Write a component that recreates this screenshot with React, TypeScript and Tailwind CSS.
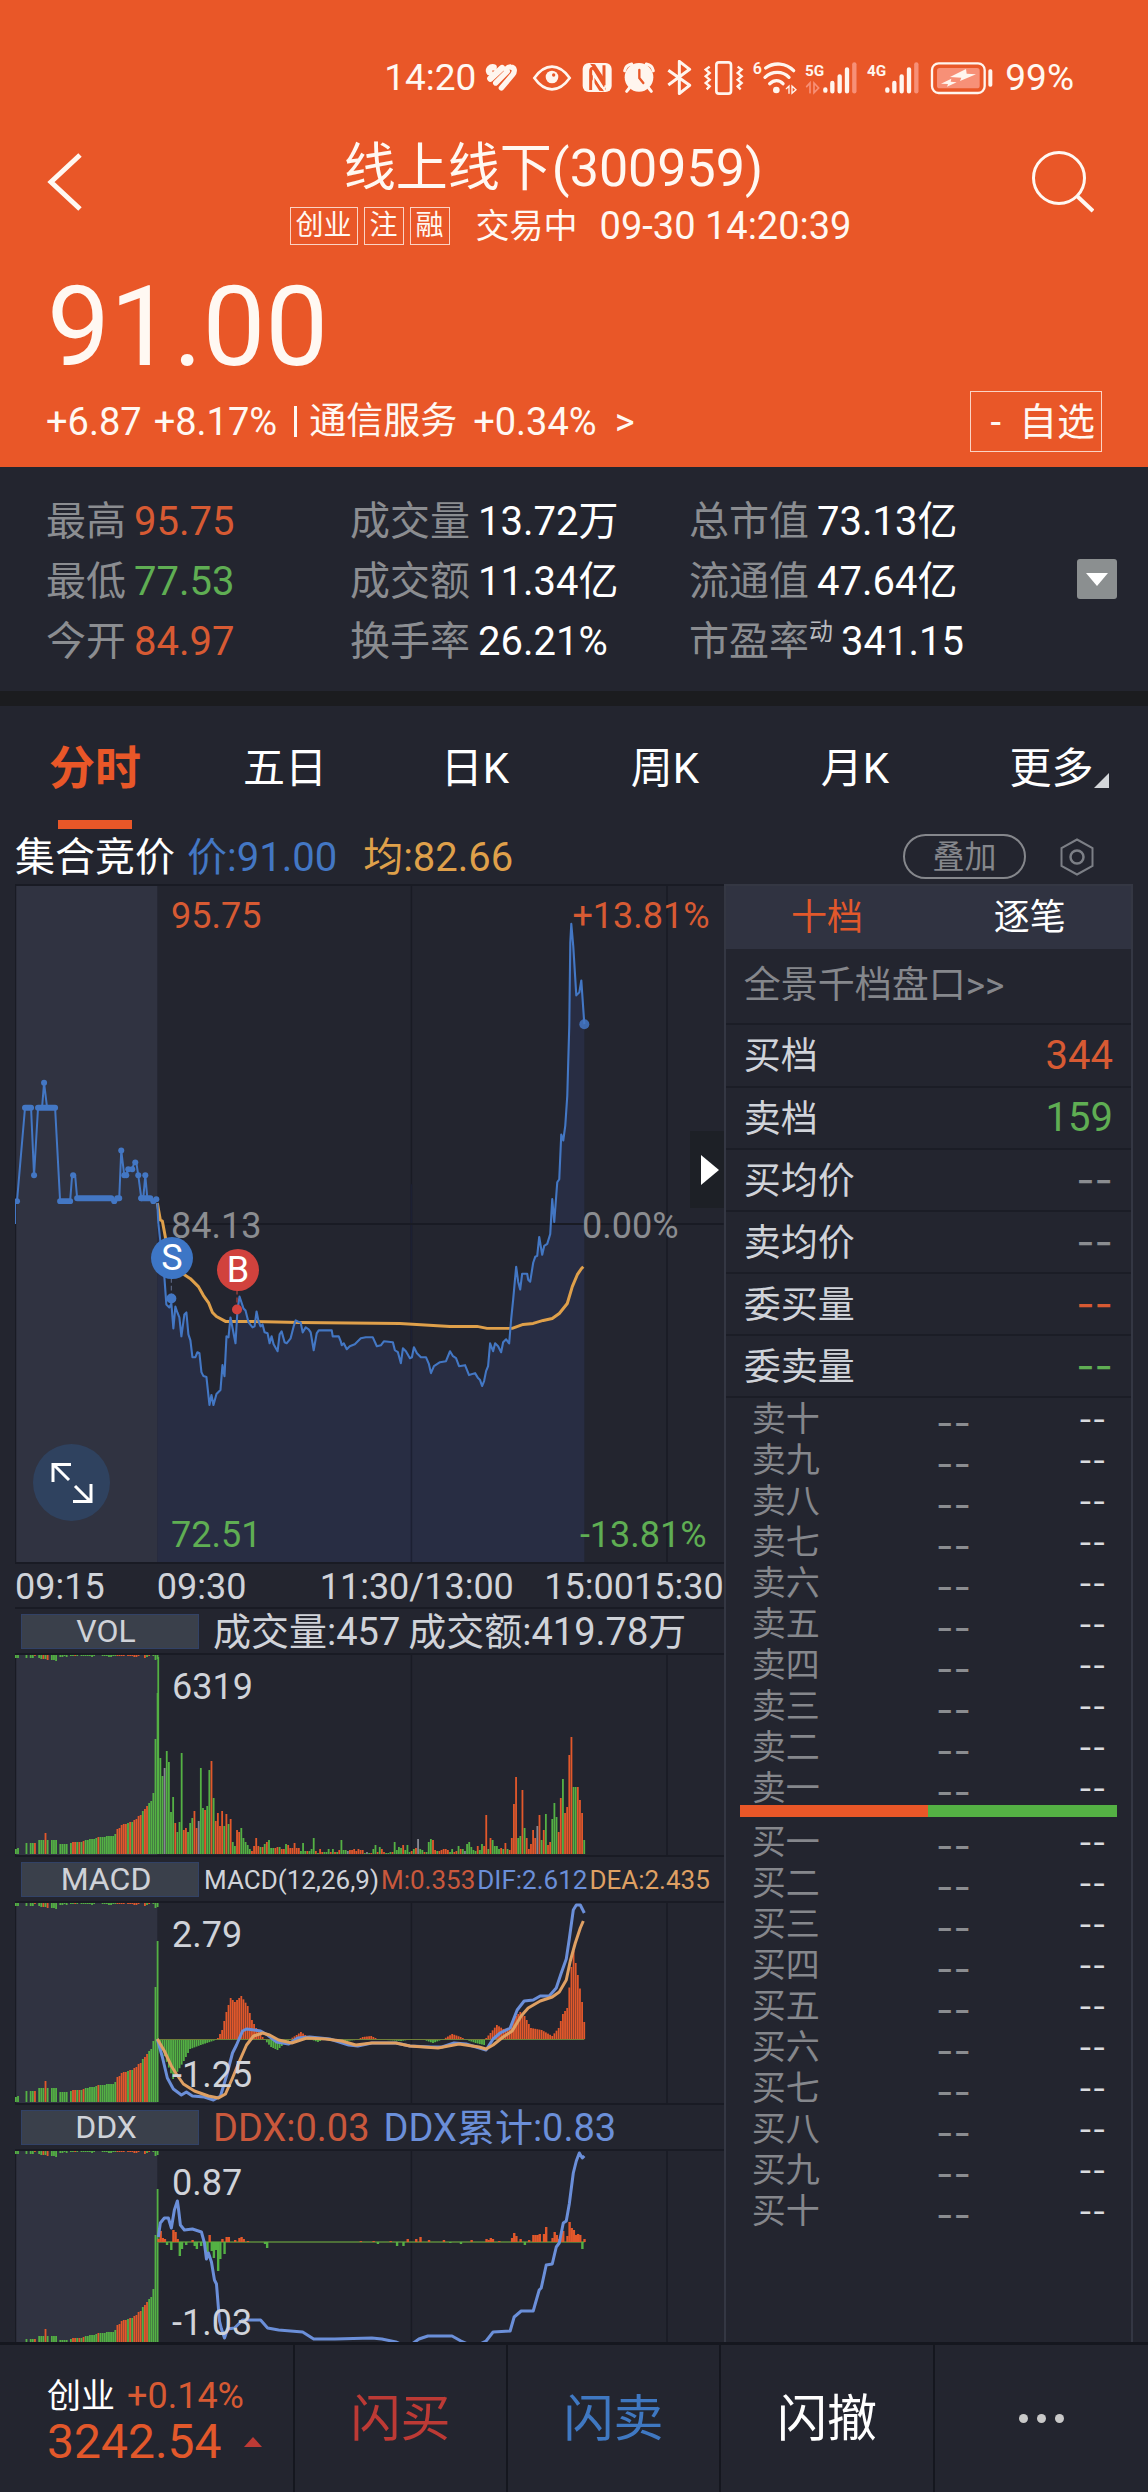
import React from "react";

const RED = "#e2582b";
const GREEN = "#54b144";
const GREY = "#868892";
const BLUE = "#4377c4";

const COLORS: Record<string, string> = { r: RED, g: GREEN, x: GREY };

/* ---------- chart data ---------- */

const auctionLine =
  "0,340 0,318 2,317 10,223 16,223 19,291 23,223 27,223 29,198 32,223 40,223 45,317 55,317 57,291 60,291 62,314 96,314 99,318 104,314 106,266 109,291 111,291 113,285 117,285 119,278 121,278 123,291 126,314 128,314 130,291 132,314 135,314 138,317 141,315";

const auctionDots: [number, number][] = [
  [2, 317], [19, 291], [29, 198], [58, 291], [99, 317], [106, 266], [109, 291], [111, 291],
  [113, 285], [117, 285], [120, 278], [123, 291], [126, 314], [130, 291], [138, 317], [141, 315],
];

const auctionRuns = "M10 223H16M23 223H40M45 317H55M62 314H96M102 314H104M126 314H135";

const priceLine =
  "142,319 143,339 149,393 151,421 154,424 156,420 158,445 160,423 162,429 164,434 166,453 169,431 171,429 173,451 175,457 177,474 180,474 182,469 184,470 186,489 188,493 191,494 194,522 196,512 198,522 201,511 205,507 207,482 209,493 211,453 213,454 215,434 220,460 222,426 224,413 226,419 228,425 230,427 233,439 237,444 239,443 241,428 243,438 245,443 247,441 249,449 252,450 254,460 256,453 258,461 262,468 264,451 266,448 269,459 271,460 275,455 278,443 280,437 282,438 285,439 287,449 290,444 293,446 295,449 298,467 301,450 303,447 316,447 317,453 323,453 325,458 326,462 328,460 331,466 334,463 339,461 345,455 350,454 357,454 361,463 365,462 368,458 377,459 379,467 382,469 385,480 387,465 390,468 394,475 396,474 398,464 401,470 405,474 410,474 413,481 415,490 418,483 424,479 430,478 434,468 437,473 440,475 443,483 449,482 453,492 459,490 462,495 464,497 466,503 468,498 470,488 472,483 474,460 477,468 479,460 482,463 485,469 487,459 490,456 493,460 495,436 497,416 500,383 502,398 504,406 506,390 511,390 512,396 514,398 517,379 519,373 521,372 523,353 526,371 528,362 531,360 534,350 536,315 538,338 541,298 543,295 545,250 547,256 549,241 551,211 553,140 554,57 555,38 557,61 560,110 563,107 565,95 568,139";

const averageLine =
  "142,319 145,336 147,337 150,353 154,379 169,391 175,395 183,403 188,412 193,419 197,429 201,433 210,438 231,438 284,439 384,440 434,443 461,443 471,445 496,445 507,441 517,440 527,437 536,435 543,430 551,420 556,403 561,391 565,385 567,383";

const volumes =
  "197g 96g 78g 86x 103g 92g 42g 57g 31r 22g 32g 101g 24r 26r 22g 31g 36g 43r 26r 33x 86g 46g 44r 48g 84g 93r 56g 33r 41r 28r 43r 28g 40r 30g 35r 12g 8g 24r 22r 26g 16g 12g 9g 5g 3r 8r 16r 8r 7g 7r 10g 12r 14g 6g 6g 6r 7r 7g 5r 5r 10g 9r 6r 6r 11r 6r 6r 3g 11g 3g 3r 3g 5g 16g 3r 1g 5r 2r 2g 2g 5g 2r 5g 2r 2g 4r 14g 4g 4g 3x 4r 4r 5r 3r 5r 4r 4r 1g 2x 1g 1r 5g 9g 2r 7g 5r 2r 1g 1g 2g 2r 12g 4g 7g 6g 9r 4g 9g 2g 3r 5g 6r 15x 5g 4g 2r 2g 12g 15g 14r 4r 3g 3r 4r 5r 5r 4r 2g 5g 2r 3r 8g 5r 5g 3x 10g 12g 7g 4g 3g 8r 4g 10g 8r 39r 5g 16r 14g 8g 8g 5g 6r 5g 11r 5g 4r 16r 50r 77r 16g 18g 64r 26g 16r 5r 10r 24r 16r 28x 39r 14g 24r 40g 9r 12r 35g 51g 37g 22r 56r 75g 41r 47r 99r 117r 67g 67g 67r 54r 41r 14g".split(" ");

const auctionVolumes =
  "5g 6g 0g 0g 0g 11g 0g 11g 11g 11r 0g 14g 14g 14g 21r 14g 0g 14g 14g 14g 0g 10g 10g 10g 10g 0g 11g 12r 12r 12g 12r 12g 13r 14g 14g 15g 15g 15g 16g 17r 17g 17g 17g 18g 18g 18g 18g 20g 25r 26r 29r 30r 30r 31g 32r 32g 34r 35r 38r 39r 43g 45r 48r 51g 53g 61g 115g 161g".split(" ");

const auctionTop =
  "3g 3g 0g 0g 0g 3g 0g 3g 3g 1r 0g 3g 4g 4r 4g 5r 0g 5g 5g 6g 0g 2g 2g 1g 2g 0g 1g 1g 1r 1g 0g 1g 1g 1g 1g 1g 2g 1g 0g 0g 0g 1g 1g 1g 2g 2g 1g 1g 1r 1r 1r 1r 0g 1r 1r 1r 2r 2r 1r 0g 0g 3r 2g 1r 0g 1g 5g 4g".split(" ");

const macdAnchors: [number, number][] = [
  [0, 0], [7, -40], [12, -22], [15, -10], [20, -6], [27, -1], [28, 1], [30, 9], [32, 27], [34, 41],
  [36, 37], [39, 43], [42, 33], [44, 19], [46, 11], [49, 2], [50, -1], [53, -8], [56, -11], [59, -5],
  [62, 0], [65, 4], [67, 7], [69, 4], [71, 0], [75, -3], [77, -1], [81, 0], [88, -2], [93, -1],
  [96, 2], [100, 3], [103, 0], [107, -1], [114, -2], [120, 0], [125, -1], [129, -4], [134, 0],
  [138, 5], [142, 2], [145, -1], [149, -4], [153, -6], [154, 1], [156, 6], [159, 14], [162, 10],
  [165, 11], [168, 23], [170, 27], [172, 23], [175, 11], [180, 9], [185, 3], [188, 11], [190, 25],
  [192, 31], [194, 72], [195, 88], [197, 64], [199, 37], [200, 17],
];

const macdBars = Array.from({ length: 201 }, (_, i) => {
  const k = Math.max(1, macdAnchors.findIndex(([x]) => x >= i));
  const [x0, y0] = macdAnchors[k - 1];
  const [x1, y1] = macdAnchors[k];
  return y0 + ((y1 - y0) * (i - x0)) / (x1 - x0);
});

const difLine =
  "142,136 147,154 152,175 158,186 166,192 171,189 177,193 189,194 198,197 205,193 211,173 217,150 221,142 227,128 231,126 245,128 252,132 261,139 273,141 282,135 294,134 314,136 333,142 342,143 356,140 380,140 394,143 415,144 426,144 438,140 450,141 470,147 477,136 484,130 494,125 501,107 508,98 517,97 524,93 533,93 540,85 545,70 550,56 553,36 557,7 560,2 564,2 568,10";

const deaLine =
  "142,136 149,148 156,163 161,171 168,181 179,188 193,193 203,195 210,191 217,175 224,158 231,142 238,133 247,130 254,132 263,137 276,140 291,135 310,136 326,138 340,142 356,140 380,140 394,143 422,145 443,141 463,144 470,146 477,142 487,134 496,128 505,113 512,105 524,98 536,94 543,89 550,77 554,58 559,40 564,25 567,18";

const ddxBars: [number, number][] = [
  [0, 3], [1, 11], [2, 4], [3, 3], [4, -3], [6, -8], [7, 12], [8, 10], [9, 3], [10, -14], [11, -7],
  [13, -3], [16, 2], [17, -4], [18, -7], [20, -4], [22, -7], [23, -12], [24, 7], [25, -9], [26, -16],
  [27, -8], [28, -29], [29, -17], [30, 3], [31, -12], [32, 5], [33, 5], [36, 2], [38, 4], [39, 5],
  [40, 3], [42, 1], [50, -2], [51, -6], [95, 1], [101, 1], [103, -2], [109, 1], [112, -4], [115, -4],
  [117, 3], [121, 3], [123, 5], [127, 2], [134, 2], [137, -1], [142, -2], [147, 2], [154, 3],
  [155, 2], [156, 4], [157, 3], [160, 1], [166, 4], [167, 9], [168, 6], [170, 3], [172, -3],
  [174, 2], [176, 7], [177, 7], [178, 7], [179, 8], [181, 8], [182, 15], [185, 4], [186, 10],
  [187, 7], [188, 3], [189, 8], [190, 11], [192, 6], [193, 20], [194, 14], [195, 12], [196, 7],
  [197, 8], [198, 7], [199, -7], [200, 3],
];

const ddxLine =
  "143,86 145,72 149,67 153,67 156,77 159,59 162,50 163,57 165,74 169,79 177,78 186,81 189,92 191,108 193,102 196,111 199,129 201,133 204,170 206,178 209,187 212,178 219,177 227,169 245,169 252,177 263,179 287,181 298,188 319,188 356,187 366,188 380,191 392,196 403,188 412,185 436,185 445,190 458,196 470,190 477,181 494,180 498,166 505,160 517,160 523,139 525,137 530,114 536,113 540,96 543,92 547,72 550,70 553,53 557,22 560,10 563,2 566,7 568,5";

/* ---------- chart pieces ---------- */

const PITCH = 2.125;
const AUCTION_PITCH = 2.11;

function parseBar(entry: string) {
  return { h: parseInt(entry, 10), color: COLORS[entry.slice(-1)] };
}

function Grid({ height }: { height: number }) {
  return (
    <g>
      <rect x={0} y={0} width={142} height={height} fill="#303341" />
      <path d={`M0.500 0V${height}M395.500 0V${height}M650.500 0V${height}`} stroke="#191b24" strokeWidth={1.5} />
    </g>
  );
}

function AuctionBars() {
  return (
    <g>
      {auctionVolumes.map((v, i) => {
        const { h, color } = parseBar(v);
        return <rect key={i} x={i * AUCTION_PITCH} y={199 - h} width={1.8} height={h} fill={color} />;
      })}
      {auctionTop.map((v, i) => {
        const { h, color } = parseBar(v);
        return <rect key={i} x={i * AUCTION_PITCH} y={0} width={1.8} height={h} fill={color} />;
      })}
    </g>
  );
}

function SignedBar({ i, v, base, width = 1.8 }: { i: number; v: number; base: number; width?: number }) {
  return (
    <rect
      x={142 + i * PITCH}
      y={v > 0 ? base - v : base}
      width={width}
      height={Math.abs(v)}
      fill={v > 0 ? RED : GREEN}
    />
  );
}

function ChartLabel({ className, children }: { className: string; children: React.ReactNode }) {
  return <span className={`absolute text-[36px] leading-none ${className}`}>{children}</span>;
}

function PriceChart() {
  return (
    <div className="relative h-[680px] border-t-2 border-b-2 border-[#191b24]">
      <svg viewBox="0 0 707 680" preserveAspectRatio="none" className="block h-full w-full">
        <Grid height={680} />
        <polygon points={`142,680 ${priceLine} 568,680`} fill="#282d43" />
        <path d="M395.500 300V680" stroke="#1c2033" strokeWidth={1.5} />
        <path d="M142 340H707" stroke="#191b24" strokeWidth={2} />
        <polyline points={auctionLine} fill="none" stroke={BLUE} strokeWidth={2} />
        <path d={auctionRuns} stroke={BLUE} strokeWidth={6} strokeLinecap="round" />
        {auctionDots.map(([x, y], i) => (
          <circle key={i} cx={x} cy={y} r={3} fill={BLUE} />
        ))}
        <polyline points={averageLine} fill="none" stroke="#dfa04a" strokeWidth={3} strokeLinejoin="round" />
        <polyline points={priceLine} fill="none" stroke={BLUE} strokeWidth={2.1} strokeLinejoin="round" />
        <circle cx={568} cy={139} r={5} fill={BLUE} opacity={0.85} />
        <path d="M156 394V412" stroke="#5a6480" strokeWidth={1.2} strokeDasharray="5 3" />
        <circle cx={156} cy={415} r={5} fill={BLUE} />
        <path d="M221.500 406V424" stroke="#b0453f" strokeWidth={1.2} strokeDasharray="5 3" />
        <circle cx={221.5} cy={426} r={5} fill="#d1423d" />
      </svg>
      <ChartLabel className="left-[156px] top-3 text-[#d75a33]">95.75</ChartLabel>
      <ChartLabel className="right-[14px] top-3 text-[#d75a33]">+13.81%</ChartLabel>
      <ChartLabel className="left-[156px] top-[322px] text-[#8b8d91]">84.13</ChartLabel>
      <ChartLabel className="right-[45px] top-[322px] text-[#8b8d91]">0.00%</ChartLabel>
      <ChartLabel className="bottom-[9px] left-[156px] text-[#5fae53]">72.51</ChartLabel>
      <ChartLabel className="bottom-[9px] right-[17px] text-[#5fae53]">-13.81%</ChartLabel>
      <span className="absolute left-[136px] top-[351px] flex size-[42px] items-center justify-center rounded-full bg-[#3d76c6] text-[36px] leading-none text-white">
        S
      </span>
      <span className="absolute left-[202px] top-[363px] flex size-[42px] items-center justify-center rounded-full bg-[#d1423d] text-[36px] leading-none text-white">
        B
      </span>
      <button
        type="button"
        aria-label="全屏"
        className="absolute bottom-[41px] left-[18px] flex size-[77px] items-center justify-center rounded-full bg-[#2f425f]"
      >
        <svg viewBox="0 0 42 42" className="size-[42px]" fill="none" stroke="#fff" strokeWidth={3}>
          <path d="M2 20V2.500H20M3 3L18 18M40 22V39.500H22M39 39L24 24" />
        </svg>
      </button>
      <button
        type="button"
        aria-label="收起盘口"
        className="absolute right-0 top-[245px] flex h-[77px] w-[34px] items-center justify-end bg-[#1d2026] pr-[5px]"
      >
        <svg viewBox="0 0 18 30" className="h-[30px] w-[18px]" fill="#fff">
          <path d="M0 0L18 15L0 30Z" />
        </svg>
      </button>
    </div>
  );
}

function IndicatorHeader({ name, children }: { name: string; children: React.ReactNode }) {
  return (
    <div className="flex h-12 shrink-0 items-center border-y-2 border-[#191b24] pl-[6px]">
      <button
        type="button"
        className="h-[35px] w-[178px] shrink-0 border border-[#324266] bg-[#3a404b] pr-2 text-[32px] leading-none text-[#cfd2d8]"
      >
        {name}
      </button>
      {children}
    </div>
  );
}

function Plot({ children }: { children: React.ReactNode }) {
  return (
    <svg viewBox="0 0 707 200" preserveAspectRatio="none" className="block h-[200px] w-full">
      <Grid height={200} />
      <AuctionBars />
      {children}
    </svg>
  );
}

function Charts() {
  return (
    <section className="flex min-w-0 flex-[708] flex-col overflow-hidden">
      <PriceChart />
      <div className="flex h-[43px] items-center pt-[2px] text-[36px] leading-none text-[#d0d3d9]">
        <span className="w-[20%]">09:15</span>
        <span className="w-[23%]">09:30</span>
        <span className="flex-1">11:30/13:00</span>
        <span>15:00</span>
        <span>15:30</span>
      </div>

      <IndicatorHeader name="VOL">
        <p className="flex gap-2 whitespace-nowrap pl-[14px] pt-[2px] text-[38px] leading-none text-[#d0d3d9]">
          <span>成交量:457</span>
          <span>成交额:419.78万</span>
        </p>
      </IndicatorHeader>
      <div className="relative h-[200px]">
        <Plot>
          {volumes.map((v, i) => {
            const { h, color } = parseBar(v);
            return <rect key={i} x={142 + i * PITCH} y={199 - h} width={1.8} height={h} fill={color} />;
          })}
        </Plot>
        <ChartLabel className="left-[157px] top-[14px] text-[#d0d3d9]">6319</ChartLabel>
      </div>

      <IndicatorHeader name="MACD">
        <p className="flex gap-[2px] whitespace-nowrap pl-[5px] pt-[2px] text-[26px] leading-none">
          <span className="text-[#d0d3d9]">MACD(12,26,9)</span>
          <span className="text-[#c9583c]">M:0.353</span>
          <span className="text-[#6b8fd9]">DIF:2.612</span>
          <span className="text-[#dfa063]">DEA:2.435</span>
        </p>
      </IndicatorHeader>
      <div className="relative h-[200px]">
        <Plot>
          {macdBars.map((v, i) => (
            <SignedBar key={i} i={i} v={v} base={136} />
          ))}
          <path d="M142 136.500H568" stroke="#6f7f3a" strokeWidth={1} />
          <polyline points={difLine} fill="none" stroke="#6b8fd9" strokeWidth={3} strokeLinejoin="round" />
          <polyline points={deaLine} fill="none" stroke="#dfa063" strokeWidth={3} strokeLinejoin="round" />
        </Plot>
        <ChartLabel className="left-[157px] top-[14px] text-[#d0d3d9]">2.79</ChartLabel>
        <ChartLabel className="bottom-[10px] left-[157px] text-[#d0d3d9]">-1.25</ChartLabel>
      </div>

      <IndicatorHeader name="DDX">
        <p className="flex gap-[14px] whitespace-nowrap pl-[14px] pt-[2px] text-[38px] leading-none">
          <span className="text-[#c9583c]">DDX:0.03</span>
          <span className="text-[#6b8fd9]">DDX累计:0.83</span>
        </p>
      </IndicatorHeader>
      <div className="relative h-[191px] overflow-hidden">
        <Plot>
          <path d="M142 91H568" stroke="#5d8a3c" strokeWidth={1.6} />
          {ddxBars.map(([i, v]) => (
            <SignedBar key={i} i={i} v={v} base={91} width={2.4} />
          ))}
          <polyline points={ddxLine} fill="none" stroke="#6b8fd9" strokeWidth={3} strokeLinejoin="round" />
        </Plot>
        <ChartLabel className="left-[157px] top-[14px] text-[#d0d3d9]">0.87</ChartLabel>
        <ChartLabel className="bottom-px left-[157px] text-[#d0d3d9]">-1.03</ChartLabel>
      </div>
    </section>
  );
}

/* ---------- order book ---------- */

const summary = [
  { label: "买档", value: "344", tone: "text-[#d75a33]" },
  { label: "卖档", value: "159", tone: "text-[#5fae53]" },
  { label: "买均价", value: "--", tone: "text-[#8b8d91]" },
  { label: "卖均价", value: "--", tone: "text-[#8b8d91]" },
  { label: "委买量", value: "--", tone: "text-[#d75a33]" },
  { label: "委卖量", value: "--", tone: "text-[#5fae53]" },
];

const numerals = ["一", "二", "三", "四", "五", "六", "七", "八", "九", "十"];

function Levels({ side, order }: { side: string; order: string[] }) {
  return (
    <table className="w-full table-fixed">
      <tbody>
        {order.map((n) => (
          <tr key={n} className="h-[41px] leading-none">
            <th scope="row" className="w-[45%] p-0 pl-[26px] text-left text-[34px] font-normal text-[#85878c]">
              {side}
              {n}
            </th>
            <td className="p-0 pl-7 pt-[6px] font-[Inter] text-[38px] leading-[30px] text-[#8b8d91]">--</td>
            <td className="p-0 pr-[25px] text-right font-[Inter] text-[30px] text-[#d9dbdf]">--</td>
          </tr>
        ))}
      </tbody>
    </table>
  );
}

function OrderBook() {
  return (
    <section className="flex min-w-0 flex-[405] flex-col border-x-2 border-t-2 border-[#343743]">
      <div role="tablist" className="grid h-[63px] grid-cols-2 bg-[#303341] text-[36px]">
        <button type="button" role="tab" aria-selected="true" className="text-[#e2582b]">
          十档
        </button>
        <button type="button" role="tab" aria-selected="false" className="text-white">
          逐笔
        </button>
      </div>
      <a href="#depth" className="flex h-[76px] items-center border-b-2 border-[#1b1d26] pl-[18px] text-[37px] text-[#85878c]">
        全景千档盘口&gt;&gt;
      </a>
      <table className="w-full">
        <tbody>
          {summary.map((row) => (
            <tr key={row.label} className="h-[62px] border-b-2 border-[#1b1d26] leading-none">
              <th scope="row" className="p-0 pl-[18px] pt-[2px] text-left text-[37px] font-normal text-[#d0d3d9]">
                {row.label}
              </th>
              <td
                className={`p-0 pr-[18px] text-right text-[40px] ${row.value === "--" ? "font-[Inter]" : ""} ${row.tone}`}
              >
                {row.value}
              </td>
            </tr>
          ))}
        </tbody>
      </table>
      <Levels side="卖" order={[...numerals].reverse()} />
      <div className="mx-[14px] mb-1 mt-[-3px] flex h-3 shrink-0">
        <div className="flex-1 bg-[#e95728]" />
        <div className="flex-1 bg-[#54b144]" />
      </div>
      <Levels side="买" order={numerals} />
    </section>
  );
}

/* ---------- header ---------- */

function StatusIcons() {
  return (
    <div className="flex h-[35px]">
      <svg viewBox="9 30 126 105" className="h-[35px] w-[42px]" fill="none" stroke="#fff5ee" strokeWidth={19} strokeLinecap="round">
        <path d="M28 66C24 58 32 50 41 52M31 86L66 54" />
        <path d="M47 99L82 64M64 114L98 74C106 64 104 52 92 51C86 50 82 54 78 58" strokeWidth={16} />
      </svg>
      <svg viewBox="135 30 156 105" className="h-[35px] w-[52px]" fill="none" stroke="#fff5ee" strokeWidth={8}>
        <path d="M163 84C180 60 196 50 216 50C236 50 252 60 269 84C252 108 236 118 216 118C196 118 180 108 163 84Z" />
        <circle cx="216" cy="81" r="19" fill="#fff5ee" stroke="none" />
        <circle cx="221" cy="75" r="5" fill="#e95728" stroke="none" />
      </svg>
      <svg viewBox="291 30 120 105" className="h-[35px] w-[40px]">
        <rect x="308" y="39" width="87" height="87" rx="18" fill="#fff5ee" />
        <path d="M332 120V64C332 54 338 52 345 60L372 104V46" fill="none" stroke="#e95728" strokeWidth="9" />
        <path d="M330 41L345 43L372 84V98L342 56ZM372 124L358 122L332 82V68L364 112Z" fill="#e95728" />
        <path d="M341 122V74L364 110C370 117 376 116 376 106" fill="none" stroke="#fff5ee" strokeWidth="5" />
      </svg>
      <svg viewBox="411 30 132 105" className="h-[35px] w-[44px]" fill="none" strokeLinecap="round">
        <circle cx="477" cy="82" r="43" fill="#fff5ee" />
        <path d="M434 62C436 51 444 44 455 42M499 42C510 44 518 51 520 62M448 114L440 124M506 114L514 124" stroke="#fff5ee" strokeWidth="9" />
        <path d="M478 60V84L490 99" stroke="#e95728" strokeWidth="7" />
      </svg>
      <svg viewBox="543 30 108 105" className="h-[35px] w-[36px]" fill="none" stroke="#fff5ee" strokeWidth={9} strokeLinejoin="round">
        <path d="M565 61L629 106L598 131V34L629 58L565 105" />
      </svg>
      <svg viewBox="651 30 153 105" className="h-[35px] w-[51px]" fill="none" stroke="#fff5ee" strokeWidth={8}>
        <rect x="709" y="37" width="44" height="94" rx="8" />
        <path d="M689 50L677 59L689 69L677 79L689 89L677 99L689 109L680 118M773 50L785 59L773 69L785 79L773 89L785 99L773 109L782 118" strokeWidth={7} />
      </svg>
      <svg viewBox="804 30 159 105" className="h-[35px] w-[53px] overflow-visible" fill="none" stroke="#fff5ee" strokeWidth={10} strokeLinecap="round">
        <path d="M857 54C882 36 918 38 941 62M855 82C876 62 908 62 927 82M869 101C882 89 898 89 909 101" />
        <circle cx="889" cy="120" r="10" fill="#fff5ee" stroke="none" />
        <path d="M919 116L927 108V130M936 108V130L948 119Z" strokeWidth={4} />
        <text x="818" y="73" fontSize="48" fontWeight="600" fill="#fff5ee" stroke="none">6</text>
      </svg>
      <svg viewBox="963 30 183 105" className="h-[35px] w-[61px] overflow-visible" fill="none" stroke="#fff5ee" strokeWidth={13} strokeLinecap="round">
        <path d="M1036 118V122M1057 99V124M1079 79V124M1101 58V124" />
        <path d="M1123 43V124" stroke="#f79077" />
        <path d="M980 110L990 99V128M1002 99V128L1016 114Z" stroke="#f79077" strokeWidth={5} />
        <text x="975" y="77" fontSize="46" fontWeight="700" fill="#fff5ee" stroke="none">5G</text>
      </svg>
      <svg viewBox="1146 30 189 105" className="h-[35px] w-[63px] overflow-visible" fill="none" stroke="#fff5ee" strokeWidth={13} strokeLinecap="round">
        <path d="M1222 118V122M1243 99V124M1265 79V124M1287 58V124" />
        <path d="M1309 43V124" stroke="#f79077" />
        <text x="1161" y="77" fontSize="46" fontWeight="700" fill="#fff5ee" stroke="none">4G</text>
      </svg>
      <svg viewBox="1335 30 213 105" className="h-[35px] w-[71px]" fill="none" stroke="#fff5ee" strokeWidth={7}>
        <rect x="1356" y="40" width="158" height="89" rx="20" />
        <rect x="1371" y="54" width="128" height="61" rx="8" fill="#f79077" stroke="none" />
        <rect x="1525" y="58" width="12" height="52" rx="5" fill="#fff5ee" stroke="none" />
        <path d="M1458 57L1410 81L1444 83L1440 93L1488 73L1460 71ZM1414 86L1383 101L1404 102L1401 110L1430 97L1412 95Z" fill="#fff5ee" stroke="none" />
      </svg>
    </div>
  );
}

function Tag({ children }: { children: React.ReactNode }) {
  return (
    <span className="flex h-[38px] items-center border border-[#fbd3c4] px-[5px] text-[28px] leading-none">{children}</span>
  );
}

function Hero() {
  return (
    <header className="bg-[#e95728] pb-[15px] pt-[60px] text-[#fff8f2]">
      <div className="flex h-[35px] items-center justify-end pr-[74px] text-[37px] leading-none">
        <span className="mr-[7px]">14:20</span>
        <StatusIcons />
        <span className="ml-[9px]">99%</span>
      </div>

      <div className="mt-[42px] flex h-[108px] items-center justify-between pl-[47px] pr-[54px]">
        <button type="button" aria-label="返回" className="mt-[-18px] w-[62px]">
          <svg viewBox="0 0 36 58" className="h-[58px] w-9" fill="none" stroke="#fff8f2" strokeWidth={5}>
            <path d="M33 2L4 29L33 56" />
          </svg>
        </button>
        <div className="flex flex-col items-center gap-2">
          <h1 className="pr-[34px] pt-[2px] text-[52px] leading-[60px]">线上线下(300959)</h1>
          <div className="flex h-[38px] items-center gap-[6px] leading-none">
            <Tag>创业</Tag>
            <Tag>注</Tag>
            <Tag>融</Tag>
            <span className="ml-[20px] text-[34px]">交易中</span>
            <span className="ml-[16px] text-[38px]">09-30 14:20:39</span>
          </div>
        </div>
        <button type="button" aria-label="搜索" className="mt-[-18px]">
          <svg viewBox="0 0 62 62" className="size-[62px]" fill="none" stroke="#fff8f2" strokeWidth={3}>
            <circle cx="27" cy="27" r="25.5" />
            <path d="M45 45L61 60" strokeWidth={4} />
          </svg>
        </button>
      </div>

      <p className="mt-6 pl-[47px] text-[112px] leading-[116px]">91.00</p>

      <div className="mt-[6px] flex h-[61px] items-center justify-between pl-[46px] pr-[46px]">
        <a href="#sector" className="flex items-center text-[38px] leading-none">
          <span>+6.87</span>
          <span className="ml-3">+8.17%</span>
          <span className="ml-[17px] mr-3 h-[31px] w-[3px] bg-[#fff8f2]" />
          <span className="text-[37px]">通信服务</span>
          <span className="ml-4">+0.34%</span>
          <span className="ml-[18px]">&gt;</span>
        </a>
        <button
          type="button"
          className="flex h-full w-[132px] items-center justify-end gap-[18px] border border-[#fbd3c4] pr-[6px] text-[38px] leading-none"
        >
          <span>-</span>
          <span>自选</span>
        </button>
      </div>
    </header>
  );
}

/* ---------- stats ---------- */

function Stat({ label, value, tone = "text-white", sup }: { label: string; value: string; tone?: string; sup?: string }) {
  return (
    <div className="flex h-[60px] items-center whitespace-nowrap">
      <dt className="text-[#8b8d91]">{label}</dt>
      {sup && <span className="mb-5 text-[24px] leading-none text-[#b9bbc0]">{sup}</span>}
      <dd className={`ml-2 ${tone}`}>{value}</dd>
    </div>
  );
}

function Stats() {
  return (
    <section className="flex items-center bg-[#23252f] pb-[19px] pl-[46px] pr-[31px] pt-[25px] text-[40px] leading-none">
      <dl className="w-[304px]">
        <Stat label="最高" value="95.75" tone="text-[#d75a33]" />
        <Stat label="最低" value="77.53" tone="text-[#5fae53]" />
        <Stat label="今开" value="84.97" tone="text-[#d75a33]" />
      </dl>
      <dl className="w-[339px]">
        <Stat label="成交量" value="13.72万" />
        <Stat label="成交额" value="11.34亿" />
        <Stat label="换手率" value="26.21%" />
      </dl>
      <dl className="flex-1">
        <Stat label="总市值" value="73.13亿" />
        <Stat label="流通值" value="47.64亿" />
        <Stat label="市盈率" sup="动" value="341.15" />
      </dl>
      <button type="button" aria-label="展开" className="mb-[6px] flex size-10 items-center justify-center rounded-[3px] bg-[#8b8f90]">
        <svg viewBox="0 0 22 13" className="h-[13px] w-[22px]" fill="#fff">
          <path d="M0 0H22L11 13Z" />
        </svg>
      </button>
    </section>
  );
}

const periods = ["分时", "五日", "日K", "周K", "月K"];

function PeriodTabs() {
  return (
    <div role="tablist" className="grid h-[123px] grid-cols-6 pr-2 text-[42px] leading-none text-white">
      {periods.map((p, i) => (
        <button
          key={p}
          type="button"
          role="tab"
          aria-selected={i === 0}
          className={
            i === 0
              ? "relative text-[46px] font-bold text-[#e95728] after:absolute after:bottom-0 after:left-1/2 after:h-[9px] after:w-[74px] after:-translate-x-1/2 after:bg-[#e95728]"
              : "pt-[2px]"
          }
        >
          {p}
        </button>
      ))}
      <button type="button" role="tab" aria-selected="false" className="flex items-center justify-center pl-7 pt-[2px]">
        更多
        <svg viewBox="0 0 15 15" className="mt-6 size-[15px]" fill="#d3d6da">
          <path d="M15 0V15H0Z" />
        </svg>
      </button>
    </div>
  );
}

function QuoteBar() {
  return (
    <div className="flex h-[55px] items-center whitespace-nowrap pl-[15px] pr-[54px] text-[40px] leading-none">
      <span className="pt-[2px] text-white">集合竞价</span>
      <span className="ml-3 pt-[2px] text-[#4377c4]">价:91.00</span>
      <span className="ml-[26px] pt-[2px] text-[#dfa04a]">均:82.66</span>
      <button
        type="button"
        className="ml-auto h-[45px] w-[123px] rounded-full border-2 border-[#85878c] text-[32px] leading-none text-[#85878c]"
      >
        叠加
      </button>
      <button type="button" aria-label="设置" className="ml-[34px]">
        <svg viewBox="0 0 34 38" className="h-[38px] w-[34px]" fill="none" stroke="#7c7f86" strokeWidth={2}>
          <path d="M17 1.500L32.500 10V28L17 36.500L1.500 28V10Z" />
          <circle cx="17" cy="19" r="6.5" strokeWidth={2.5} />
        </svg>
      </button>
    </div>
  );
}

function BottomBar() {
  return (
    <footer className="grid h-[150px] grid-cols-[295fr_213fr_213fr_214fr_213fr] divide-x-2 divide-[#15171f] border-t-3 border-[#15171f] text-[50px] leading-none">
      <a href="#index" className="flex flex-col justify-center gap-1 pl-[47px] pt-[6px]">
        <span className="flex items-center gap-3">
          <span className="text-[34px] text-white">创业</span>
          <span className="text-[36px] text-[#d75a33]">+0.14%</span>
        </span>
        <span className="flex items-center gap-[22px] text-[48px] text-[#e2582b]">
          3242.54
          <svg viewBox="0 0 18 10" className="h-[10px] w-[18px]" fill="#bd3a35">
            <path d="M9 0L18 10H0Z" />
          </svg>
        </span>
      </a>
      <button type="button" className="text-[#bd3a35]">闪买</button>
      <button type="button" className="text-[#3f78c2]">闪卖</button>
      <button type="button" className="text-white">闪撤</button>
      <button type="button" aria-label="更多操作" className="flex items-center justify-center gap-[9px]">
        <span className="size-[9px] rounded-full bg-[#c9c9c9]" />
        <span className="size-[9px] rounded-full bg-[#c9c9c9]" />
        <span className="size-[9px] rounded-full bg-[#c9c9c9]" />
      </button>
    </footer>
  );
}

export default function App() {
  return (
    <main className="min-h-screen bg-[#23252f] font-[Roboto,'Noto_Sans_CJK_SC',sans-serif]">
      <Hero />
      <Stats />
      <div className="h-[15px] bg-[#1b1c1f]" />
      <PeriodTabs />
      <QuoteBar />
      <div className="flex pl-[15px] pr-[15px]">
        <Charts />
        <OrderBook />
      </div>
      <BottomBar />
    </main>
  );
}
